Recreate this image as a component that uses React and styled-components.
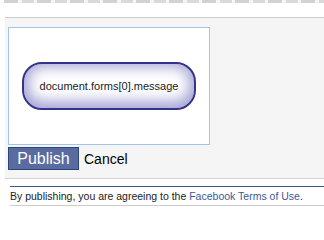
import React from 'react';
import styled, { createGlobalStyle } from 'styled-components';

const GlobalStyle = createGlobalStyle`
  html, body {
    margin: 0;
    padding: 0;
    background: #ffffff;
    font-family: "Liberation Sans", Arial, sans-serif;
  }
`;

const Page = styled.div`
  width: 324px;
  height: 210px;
  overflow: hidden;
  background: #ffffff;
`;

const Header = styled.div`
  height: 17px;
  padding-left: 4px;
`;

const CutOffRow = styled.div`
  height: 3px;
  background: repeating-linear-gradient(
    90deg,
    #d2d2d2 0 14px,
    #f4f4f4 14px 18px,
    #dadada 18px 30px,
    #f6f6f6 30px 33px
  );
`;

const Panel = styled.div`
  margin-left: 5px;
  background: #f5f5f5;
  border-top: 1px solid #cccccc;
  border-bottom: 1px solid #d4d4d4;
  padding: 9px 0 8px 3px;
`;

const EditorBox = styled.div`
  width: 200px;
  height: 116px;
  background: #ffffff;
  border: 1px solid #9fc6e6;
  display: flex;
  align-items: center;
  justify-content: center;
`;

const Pill = styled.div`
  width: 170px;
  height: 44px;
  border: 2px solid #33338a;
  border-radius: 20px;
  background: #ffffff;
  box-shadow: inset 0 -2px 14px 5px #a4a4d6;
  display: flex;
  align-items: center;
  justify-content: center;
  font-size: 11px;
  color: #222222;
`;

const Actions = styled.div`
  display: flex;
  align-items: center;
  gap: 5px;
  margin-top: 2px;
`;

const PublishButton = styled.button`
  height: 23px;
  width: 71px;
  padding: 0;
  border: 1px solid #2c467c;
  background: #5a6c9f;
  color: #ffffff;
  font-family: "Liberation Sans", Arial, sans-serif;
  font-size: 16px;
  line-height: 20px;
`;

const CancelLink = styled.span`
  font-size: 14px;
  color: #000000;
`;

const Notice = styled.div`
  margin: 7px 0 0 10px;
  border-top: 1px solid #3b5998;
  border-bottom: 1px solid #cccccc;
  padding: 3px 0 3px 0;
  font-size: 10.5px;
  line-height: 12px;
  color: #222222;
`;

const TermsLink = styled.a`
  color: #3b5998;
  text-decoration: none;
`;

export default function App() {
  return (
    <Page>
      <GlobalStyle />
      <Header>
        <CutOffRow />
      </Header>
      <Panel>
        <EditorBox>
          <Pill>document.forms[0].message</Pill>
        </EditorBox>
        <Actions>
          <PublishButton>Publish</PublishButton>
          <CancelLink>Cancel</CancelLink>
        </Actions>
      </Panel>
      <Notice>
        By publishing, you are agreeing to the <TermsLink href="#">Facebook Terms of Use</TermsLink>.
      </Notice>
    </Page>
  );
}
